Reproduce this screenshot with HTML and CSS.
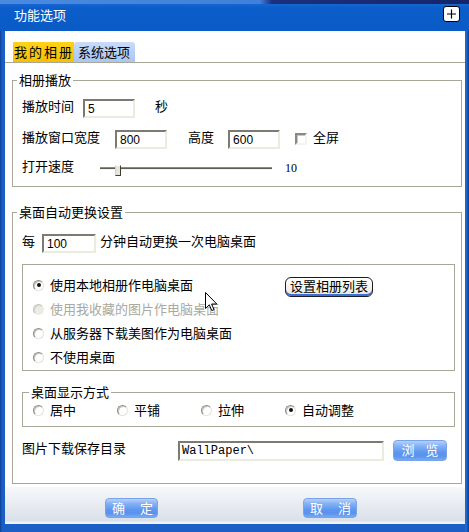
FILE: index.html
```html
<!DOCTYPE html>
<html>
<head>
<meta charset="utf-8">
<link rel="stylesheet" href="styles.css">
</head>
<body>
<div class="window">
  <div class="topstrip"></div>
  <div class="titlebar">
    <span class="title">功能选项</span>
    <span class="close"><svg width="17" height="16" viewBox="0 0 17 16"><path d="M8.5 3.5v9M4 8h9" stroke="#000" stroke-width="1.2" fill="none"/></svg></span>
  </div>
  <div class="body">
    <div class="client">
      <div class="tabs">
        <span class="tab active">我的相册</span>
        <span class="tab">系统选项</span>
      </div>
      <div class="panel">
        <fieldset class="group g1">
          <legend>相册播放</legend>
          <div class="row r1">
            <span class="lbl">播放时间</span>
            <span class="field f-time">5</span>
            <span class="lbl unit">秒</span>
          </div>
          <div class="row r2">
            <span class="lbl">播放窗口宽度</span>
            <span class="field f-w">800</span>
            <span class="lbl hlbl">高度</span>
            <span class="field f-h">600</span>
            <span class="check"></span>
            <span class="lbl clbl">全屏</span>
          </div>
          <div class="row r3">
            <span class="lbl">打开速度</span>
            <span class="slider"><span class="thumb"></span></span>
            <span class="num">10</span>
          </div>
        </fieldset>

        <fieldset class="group g2">
          <legend>桌面自动更换设置</legend>
          <div class="row r4">
            <span class="lbl">每</span>
            <span class="field f-min">100</span>
            <span class="lbl mlbl">分钟自动更换一次电脑桌面</span>
          </div>
          <div class="inner">
            <div class="opt">
              <span class="radio on"></span><span class="olbl">使用本地相册作电脑桌面</span>
              <span class="setbtn">设置相册列表</span>
            </div>
            <div class="opt disabled">
              <span class="radio"></span><span class="olbl">使用我收藏的图片作电脑桌面</span>
            </div>
            <div class="opt">
              <span class="radio"></span><span class="olbl">从服务器下载美图作为电脑桌面</span>
            </div>
            <div class="opt">
              <span class="radio"></span><span class="olbl">不使用桌面</span>
            </div>
          </div>
          <fieldset class="group g3">
            <legend>桌面显示方式</legend>
            <div class="modes">
              <span class="mode"><span class="radio"></span><span class="olbl">居中</span></span>
              <span class="mode"><span class="radio"></span><span class="olbl">平铺</span></span>
              <span class="mode"><span class="radio"></span><span class="olbl">拉伸</span></span>
              <span class="mode"><span class="radio on"></span><span class="olbl">自动调整</span></span>
            </div>
          </fieldset>
          <div class="row r5">
            <span class="lbl">图片下载保存目录</span>
            <span class="field f-dir">WallPaper\</span>
            <span class="bluebtn browse">浏 览</span>
          </div>
        </fieldset>
      </div>
    </div>
    <div class="footer">
      <span class="bluebtn ok">确 定</span>
      <span class="bluebtn cancel">取 消</span>
    </div>
  </div>
  <svg class="cursor" width="13" height="20" viewBox="0 0 13 20"><path d="M0.5 0.5L0.5 16.5L4.3 12.8L6.8 18.6L9 17.6L6.6 12L11.8 12Z" fill="#fff" stroke="#000" stroke-width="1"/></svg>
</div>
</body>
</html>
```

FILE: styles.css
```css
* { box-sizing: border-box; }
html, body { margin: 0; padding: 0; }
body {
  width: 469px;
  height: 532px;
  overflow: hidden;
  font-family: "Noto Sans CJK SC", "Liberation Sans", sans-serif;
  font-size: 13px;
  color: #000;
  background: #0d4fa8;
}
.window {
  width: 469px;
  height: 532px;
  position: relative;
  display: flex;
  flex-direction: column;
  background: linear-gradient(to right, #0b3f92 0, #1a5ec6 2px, #1a5ec6 465px, #2a70d6 466px, #0b48a4 468px);
}
.topstrip {
  position: absolute;
  left: 0; top: 0;
  width: 469px; height: 4px;
  background: linear-gradient(to right, #4a8be0 0, #3f80da 260px, #1b2f7c 272px, #14266a 100%);
}
.titlebar {
  height: 31px;
  flex: none;
  display: flex;
  align-items: center;
  padding: 2px 9px 0 14px;
  color: #fff;
  background: linear-gradient(#3d7fdc 0, #1766d2 4px, #0b5dc9 8px, #0a5bc6 100%);
}
.title {
  flex: 1;
  line-height: 16px;
  margin-bottom: 4px;
}
.close {
  width: 17px;
  height: 16px;
  background: #fff;
  border: 1px solid #000;
  border-radius: 3px;
  display: flex;
  align-items: center;
  justify-content: center;
  margin-bottom: 6px;
}
.close svg { display: block; margin: -1px; }
.body {
  flex: 1;
  display: flex;
  flex-direction: column;
  margin: 0 4px 8px 5px;
  background: #fff;
}
.client {
  flex: 1;
  padding-top: 11px;
}
.tabs {
  display: flex;
  height: 21px;
  padding-left: 8px;
  border-bottom: 1px solid #a8a898;
}
.tab {
  width: 61px;
  height: 20px;
  line-height: 20px;
  padding-left: 4px;
  background: linear-gradient(#c9dbf8, #a9c6f2);
  border-radius: 3px 3px 0 0;
}
.tab.active {
  padding-left: 1px;
  letter-spacing: 2px;
  border-radius: 0;
  background: linear-gradient(#ffd21a, #f7c000);
}
.panel {
  padding: 0 3px 0 7px;
}
.group {
  margin: 0;
  border: 1px solid #a8a898;
  min-width: 0;
}
.group legend {
  padding: 0 2px;
  margin-left: -5px;
  line-height: 16px;
  font-size: 13px;
}
.g1 {
  margin-top: 9px;
  padding: 0 0 8px 9px;
}
.row {
  display: flex;
  align-items: center;
  height: 19px;
}
.lbl {
  line-height: 16px;
  margin-bottom: 5px;
  white-space: nowrap;
}
.field {
  height: 19px;
  border: 2px solid;
  border-color: #7b7b74 #ecebe0 #ecebe0 #7b7b74;
  background: #fff;
  font-family: "Liberation Sans", sans-serif;
  font-size: 12px;
  line-height: 15px;
  padding-left: 3px;
  padding-top: 1px;
}
.r1 { margin-top: 11px; }
.f-time { width: 52px; margin-left: 9px; }
.unit { margin-left: 20px; }
.r2 { margin-top: 12px; }
.f-w { width: 52px; margin-left: 15px; }
.hlbl { margin-left: 21px; }
.f-h { width: 52px; margin-left: 14px; }
.check {
  width: 12px;
  height: 12px;
  margin-left: 15px;
  margin-bottom: 2px;
  border: 2px solid;
  border-color: #8a8a84 #f4f4ee #f4f4ee #8a8a84;
  box-shadow: inset 1px 1px #c8c8c0;
  background: #fff;
}
.clbl { margin-left: 6px; }
.r3 { margin-top: 9px; height: 20px; }
.slider {
  width: 172px;
  height: 3px;
  margin-left: 26px;
  border-top: 1px solid #8c8c7c;
  border-bottom: 1px solid #f4f4f0;
  background: #5e5e52;
  display: flex;
  align-items: center;
  padding-left: 15px;
}
.thumb {
  width: 6px;
  height: 11px;
  flex: none;
  margin-top: 4px;
  background: #e8e6dc;
  border: 1px solid;
  border-color: #fff #3e3e36 #3e3e36 #d0d0c4;
}
.num {
  margin-left: 13px;
  font-family: "Liberation Serif", serif;
  font-size: 12px;
  line-height: 14px;
}
.g2 {
  margin-top: 17px;
  padding: 0 0 22px 9px;
}
.r4 { margin-top: 14px; }
.f-min { width: 54px; margin-left: 7px; }
.mlbl { margin-left: 4px; }
.inner {
  width: 433px;
  margin-top: 11px;
  border: 1px solid #a8a898;
  padding: 8px 0 1px 10px;
}
.opt {
  display: flex;
  align-items: center;
  height: 24px;
}
.radio {
  width: 11px;
  height: 11px;
  flex: none;
  border-radius: 50%;
  border: 1px solid;
  border-color: #8e8e86 #e4e4dc #e4e4dc #8e8e86;
  box-shadow: inset 1px 1px #c6c6be;
  background: #fff;
  display: flex;
  align-items: center;
  justify-content: center;
}
.radio.on::after {
  content: "";
  width: 4px;
  height: 4px;
  border-radius: 50%;
  background: #111;
}
.olbl {
  margin-left: 6px;
  line-height: 16px;
  margin-bottom: 1px;
  white-space: nowrap;
}
.disabled .olbl { color: #a9a9a0; }
.disabled .radio {
  background: #ecece6;
  border-color: #c4c4bc #ecece6 #ecece6 #c4c4bc;
  box-shadow: inset 1px 1px #d8d8d0;
}
.setbtn {
  margin-left: 92px;
  margin-top: 4px;
  width: 88px;
  height: 20px;
  line-height: 16px;
  text-align: center;
  border: 1px solid #1a1a2a;
  border-radius: 6px;
  background: linear-gradient(#ffffff, #f0efe8 70%, #e2e0d6);
  box-shadow: inset 0 -2px #3f6fcf;
}
.g3 {
  width: 433px;
  margin-top: 13px;
  padding: 0 0 6px 10px;
}
.g3 legend { margin-left: -4px; }
.modes {
  display: flex;
  height: 20px;
  align-items: center;
}
.mode {
  width: 84px;
  display: flex;
  align-items: center;
}
.r5 { margin-top: 13px; height: 21px; }
.f-dir {
  width: 206px;
  height: 20px;
  margin-left: 52px;
  font-family: "Liberation Mono", monospace;
  font-size: 12px;
  padding-left: 2px;
}
.bluebtn {
  height: 20px;
  border-radius: 4px;
  border: 1px solid #79a4ea;
  color: #fff;
  text-align: center;
  line-height: 17px;
  letter-spacing: 6px;
  text-indent: 6px;
  background: linear-gradient(#b6d1fa 0, #86b2f5 25%, #5d96ef 60%, #5a92ee 80%, #78aaf3 100%);
  white-space: nowrap;
}
.browse {
  width: 54px;
  height: 21px;
  margin-left: 9px;
  letter-spacing: 4px;
  text-indent: 4px;
}
.footer {
  height: 37px;
  flex: none;
  display: flex;
  align-items: flex-start;
  padding: 11px 0 0 100px;
  gap: 145px;
  background: linear-gradient(#f7f8fb 0, #eaeef3 40%, #d9e0e8 92%, #eef3f8 95%, #eef3f8 100%);
}
.ok { width: 53px; }
.cancel { width: 54px; }
.cursor {
  position: absolute;
  left: 205px;
  top: 292px;
}
```
